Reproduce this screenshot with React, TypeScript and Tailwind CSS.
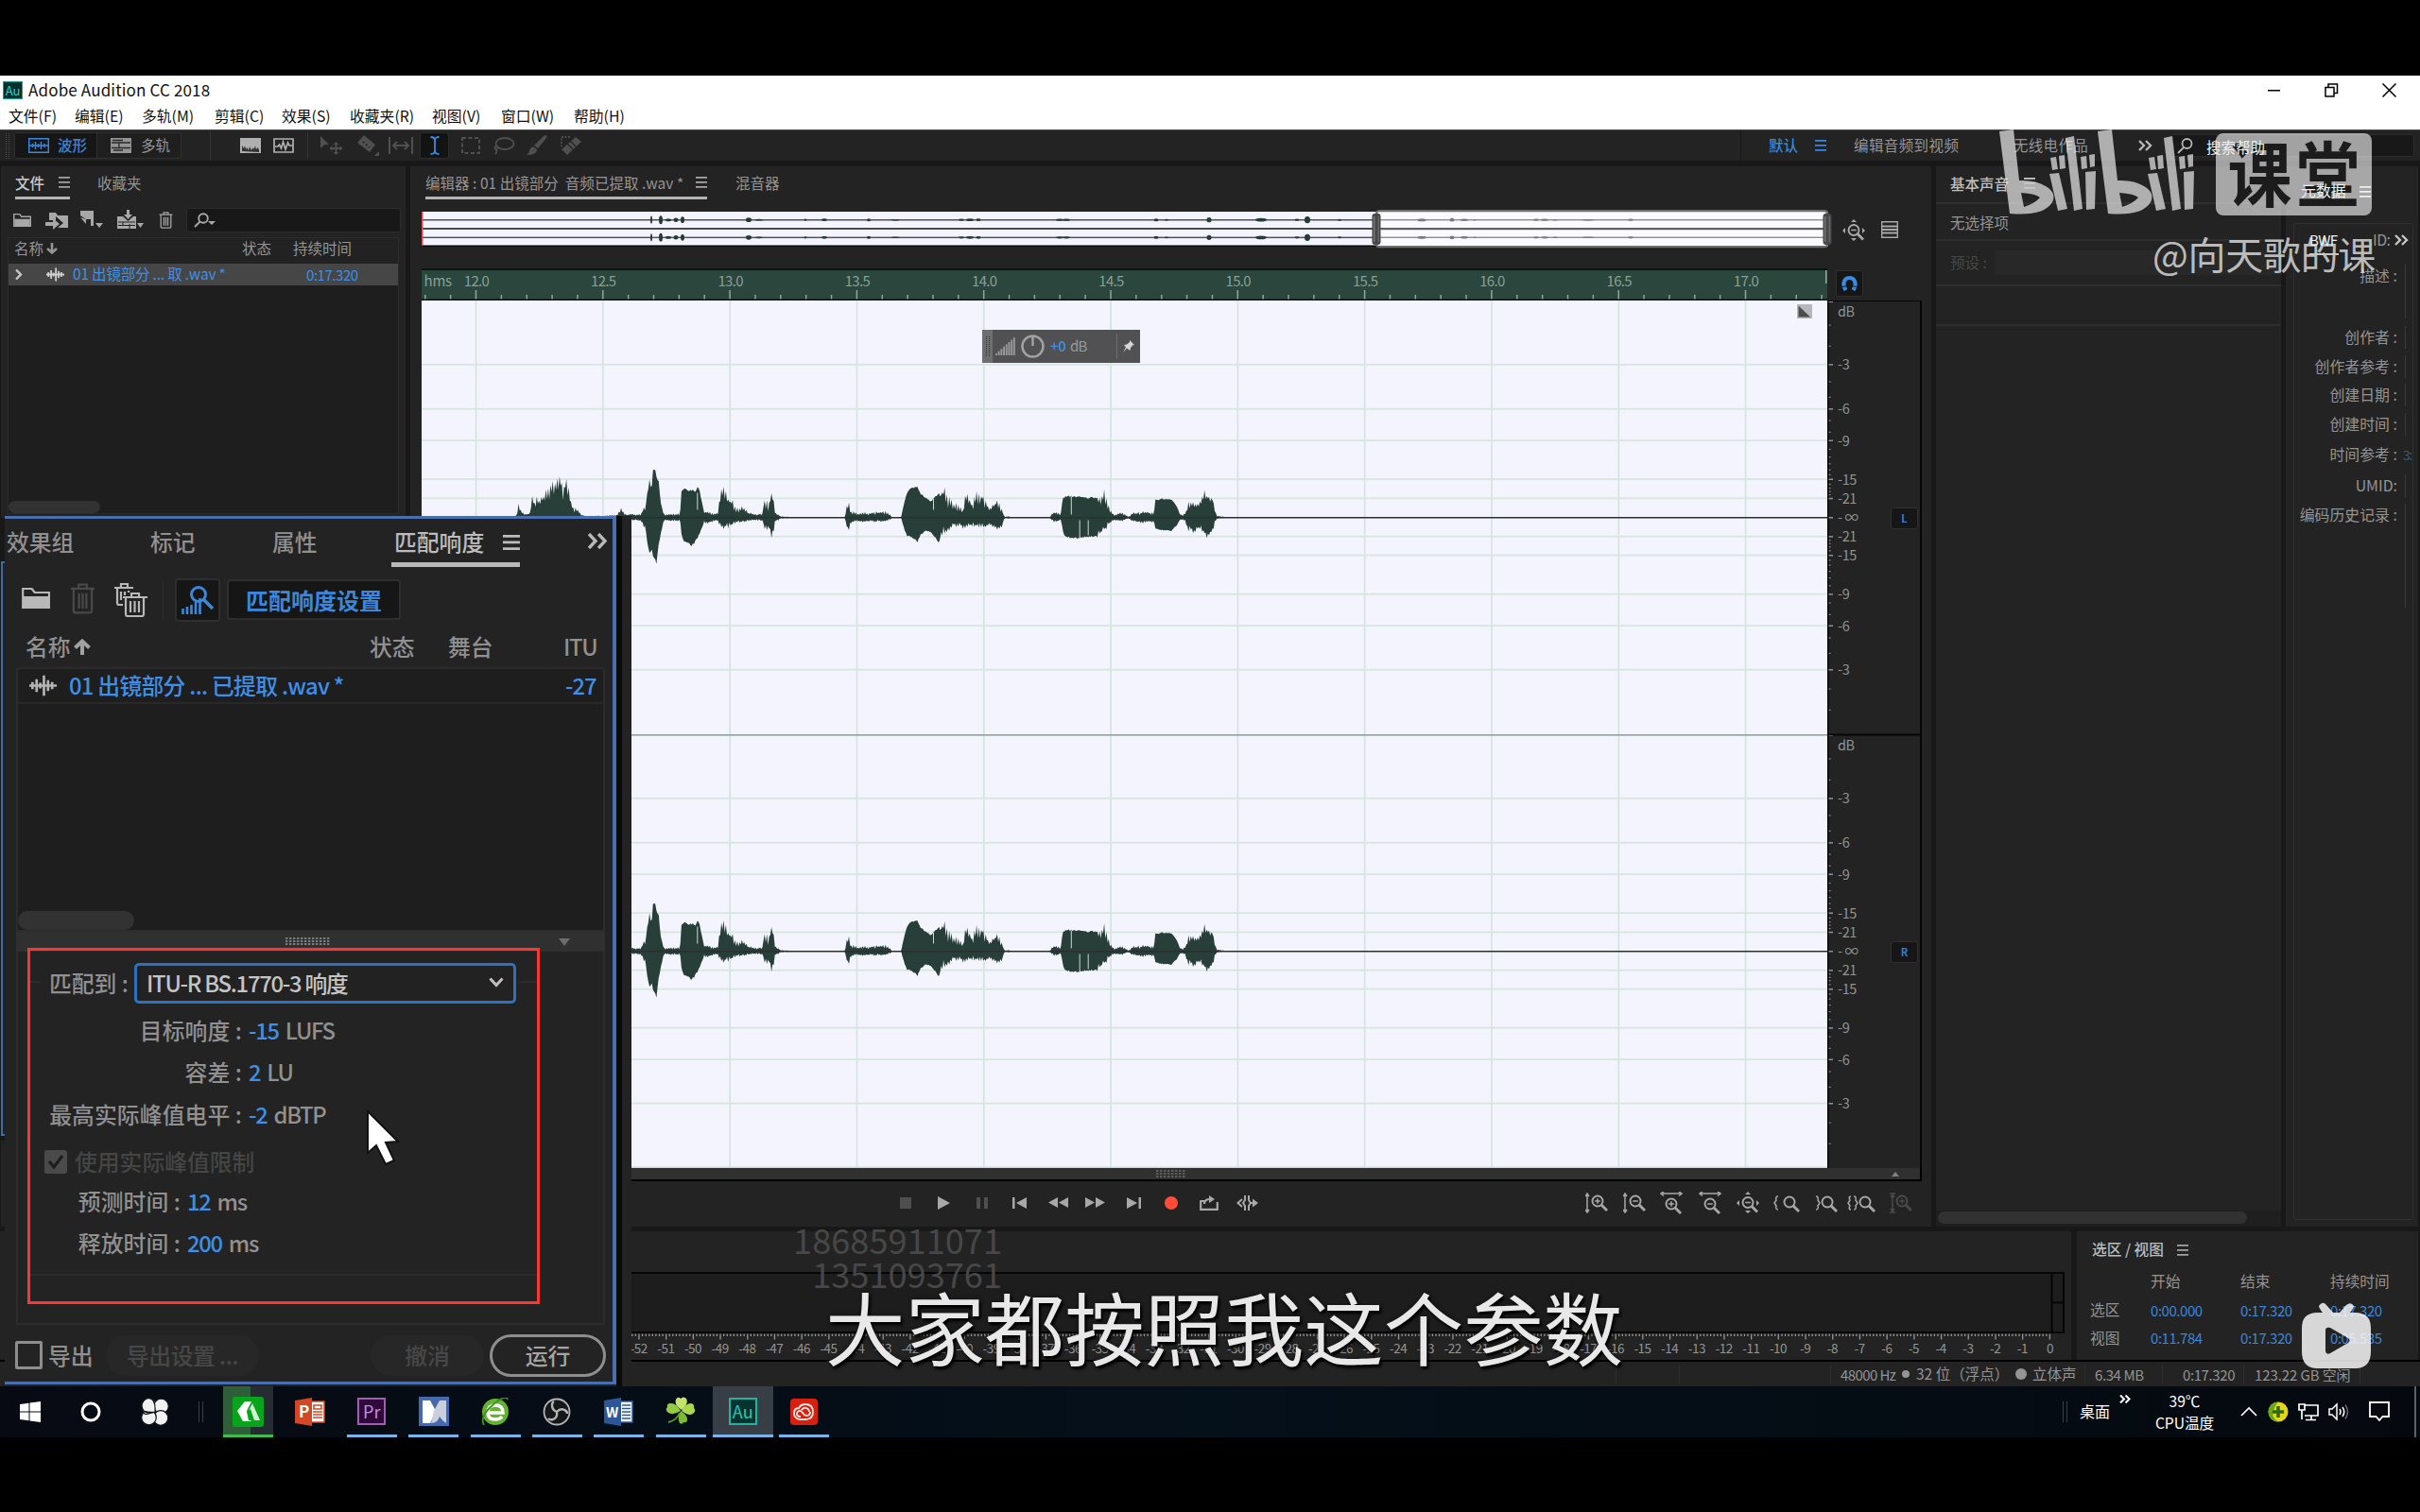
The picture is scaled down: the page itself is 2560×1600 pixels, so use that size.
import React from 'react';

type P = { children?: React.ReactNode; className?: string };

const Ic = ({ w, h, className = '', children }: { w: number; h: number; className?: string; children: React.ReactNode }) => (
  <svg width={w} height={h} viewBox={`0 0 ${w} ${h}`} fill="currentColor" className={`shrink-0 ${className}`}>
    {children}
  </svg>
);

const Burger = ({ className = '' }: P) => (
  <Ic w={12} h={13} className={className}>
    <path d="M0 0h12v1.8H0zM0 5h12v1.8H0zM0 10h12v1.8H0z" />
  </Ic>
);

const Sep = ({ className = '' }: P) => <div className={`w-px shrink-0 ${className}`} />;

const Grip = ({ cols, rows, className = '' }: { cols: number; rows: number; className?: string }) => (
  <Ic w={cols * 4} h={rows * 3} className={className}>
    {Array.from({ length: cols * rows }, (_, i) => (
      <rect key={i} x={(i % cols) * 4} y={Math.floor(i / cols) * 3} width="2.4" height="2" />
    ))}
  </Ic>
);

const WaveGlyph = ({ w, h, className = '' }: { w: number; h: number; className?: string }) => (
  <svg width={w} height={h} viewBox="0 0 30 22" className={`shrink-0 ${className}`} stroke="currentColor" strokeWidth="2.8" fill="none">
    <path d="M0 11h30M3.500 7v8M8 4v14M12 8v6M16 0v22M20.500 5v12M25 7v8" />
  </svg>
);

const Trash = ({ w, h, className = '' }: { w: number; h: number; className?: string }) => (
  <svg width={w} height={h} viewBox="0 0 26 34" className={`shrink-0 ${className}`} stroke="currentColor" strokeWidth="2.4" fill="none">
    <path d="M0 6h26M8.5 5.500V1.500h9V5.500M3 7v23q0 2.500 2.500 2.500h15q2.500 0 2.500-2.500V7M9 11v17M13 11v17M17 11v17" />
  </svg>
);

const Folder = ({ w, h, className = '' }: { w: number; h: number; className?: string }) => (
  <svg width={w} height={h} viewBox="0 0 30 24" className={`shrink-0 ${className}`}>
    <path d="M1.200 22V2h9.500l3 4H29v16z" stroke="currentColor" strokeWidth="2.200" fill="none" />
    <path d="M2 10h26v12H2z" fill="currentColor" />
  </svg>
);

/* ---------- wave form data: [x, above, below] ---------- */
const KEYS: number[][] = [
  [-213, 2, 2], [-208, 14, 8], [-205, 50, 10], [-201, 26, 8], [-190, 10, 8], [-176, 16, 10], [-174, 84, 10], [-168, 55, 10], [-158, 66, 10],
  [-145, 74, 10], [-138, 102, 10], [-120, 114, 10], [-114, 118, 10], [-109, 150, 10], [-104, 142, 10], [-98, 116, 10], [-92, 126, 10], [-86, 115, 10],
  [-82, 50, 10], [-70, 32, 8], [-55, 10, 8], [-44, 5, 5], [-20, 5, 5],
  [0, 6, 6], [28, 8, 8], [38, 30, 8], [50, 10, 8], [85, 12, 12], [95, 40, 40], [103, 95, 95], [106, 125, 120], [110, 80, 100],
  [113, 155, 120], [118, 150, 135], [122, 130, 152], [127, 120, 90], [132, 45, 50], [140, 10, 10], [178, 12, 12], [181, 80, 50],
  [186, 90, 75], [200, 84, 85], [206, 86, 90], [215, 85, 75], [221, 100, 60], [228, 60, 40], [234, 20, 20], [250, 18, 18], [260, 12, 12],
  [269, 15, 15], [271, 65, 28], [279, 100, 38], [284, 86, 33], [294, 65, 32], [300, 58, 27], [310, 34, 20], [325, 36, 15], [340, 17, 12],
  [360, 12, 10], [373, 12, 12], [376, 50, 38], [382, 64, 44], [388, 28, 30], [392, 92, 64], [396, 88, 62], [400, 55, 42], [403, 15, 10], [410, 10, 12],
  [416, 3, 3], [435, 2, 2], [436, 0, 0], [569, 0, 0], [571, 28, 30], [578, 50, 42], [583, 20, 20], [590, 20, 14], [600, 14, 14],
  [665, 20, 15], [680, 3, 3], [681, 0, 0], [702, 0, 0], [703, 12, 10], [710, 50, 40], [716, 82, 60], [728, 92, 62], [740, 102, 80],
  [748, 75, 55], [760, 62, 42], [772, 50, 45], [780, 62, 60], [788, 70, 75], [793, 78, 80], [797, 105, 65], [803, 95, 55], [812, 64, 42],
  [820, 84, 42], [823, 48, 30], [840, 42, 30], [850, 22, 34], [853, 84, 38], [862, 80, 32], [870, 50, 27], [880, 78, 34], [888, 86, 36],
  [895, 76, 32], [905, 45, 30], [915, 34, 27], [925, 56, 38], [935, 50, 38], [942, 28, 33], [946, 3, 2], [960, 3, 3], [962, 0, 0],
  [1053, 0, 0], [1057, 8, 6], [1065, 20, 18], [1080, 12, 10], [1083, 60, 35], [1090, 66, 62], [1112, 67, 66], [1140, 62, 62],
  [1165, 64, 60], [1172, 80, 56], [1180, 86, 50], [1186, 80, 40], [1195, 30, 20], [1205, 10, 10], [1225, 16, 12], [1238, 4, 3],
  [1243, 4, 4], [1250, 17, 16], [1275, 18, 18], [1297, 16, 16], [1301, 14, 14], [1304, 55, 35], [1315, 58, 40], [1342, 59, 42],
  [1355, 35, 25], [1362, 12, 10], [1368, 8, 8], [1375, 14, 14], [1383, 50, 44], [1395, 54, 50], [1408, 48, 34], [1414, 66, 50],
  [1422, 86, 60], [1430, 84, 72], [1440, 74, 50], [1446, 20, 15], [1450, 6, 5], [1460, 3, 2], [1485, 1, 1], [1486, 0, 0],
];
const SMOOTH = [[100, 136], [181, 232], [705, 792], [1084, 1166], [1304, 1360]];

function wavePath(cy: number) {
  const top: string[] = [];
  const bot: string[] = [];
  let seed = 7;
  const rnd = () => {
    seed = (seed * 16807) % 2147483647;
    return seed / 2147483647;
  };
  let k = 0;
  let n = 0;
  for (let v = -213; v <= 1486; v += 2.7) {
    n++;
    while (k < KEYS.length - 2 && KEYS[k + 1][0] < v) k++;
    const [a, b] = [KEYS[k], KEYS[k + 1]];
    const t = (v - a[0]) / (b[0] - a[0]);
    const smooth = SMOOTH.some(([s, e]) => v >= s && v <= e);
    const peak = n % 2 === 0;
    const j1 = smooth ? 0.95 + rnd() * 0.09 : peak ? 0.78 + rnd() * 0.3 : 0.42 + rnd() * 0.35;
    const j2 = smooth ? 0.95 + rnd() * 0.09 : peak ? 0.78 + rnd() * 0.3 : 0.5 + rnd() * 0.35;
    const x = (v / 2.24 + 640 - 446).toFixed(1);
    top.push(`${x} ${(cy - ((a[1] + (b[1] - a[1]) * t) / 3) * j1).toFixed(1)}`);
    bot.push(`${x} ${(cy + ((a[2] + (b[2] - a[2]) * t) / 3) * j2).toFixed(1)}`);
  }
  return `M${top.join('L')}L${bot.reverse().join('L')}Z`;
}

const DB: [string, number][] = [['-3', 68.7], ['-6', 115.6], ['-9', 149], ['-15', 190], ['-21', 210.3], ['- ∞', 230.5], ['-21', 250.6], ['-15', 270.5], ['-9', 311.6], ['-6', 345], ['-3', 391.5]];
const DBMINOR = [74, 112, 176, 204, 246, 267, 298, 312, 324, 335, 344, 361, 368, 374, 380].flatMap((v) => [v, 842 - v]).map((v) => v / 1.704 - 17);
const TICK0 = 57.5;
const TICKW = 134.3;

function WaveView() {
  return (
    <svg width="1487" height="918" viewBox="0 0 1487 918" className="block shrink-0 bg-[#f3f4fd]">
      {Array.from({ length: 11 }, (_, i) => (
        <rect key={i} x={TICK0 + TICKW * i - 0.75} y="0" width="1.7" height="918" fill="#d7e4de" />
      ))}
      {[0, 459].map((o) => (
        <g key={o}>
          {DB.map(([l, y], i) => (l === '- ∞' ? null : <rect key={i} x="0" y={y + o - 1.75} width="1487" height="1.700" fill="#d6e6dc" />))}
        </g>
      ))}
      <rect x="0" y="459" width="1487" height="1.600" fill="#8fa398" />
      {[229.500, 688.500].map((cy) => (
        <g key={cy}>
          <path d={wavePath(cy)} fill="#273f38" />
          <path d={`M291.800 ${cy - 26}v18M687.300 ${cy - 22}v19M696.200 ${cy + 3}v20M705.200 ${cy + 3}v16M541.500 ${cy - 20}v12`} stroke="#dfe6e6" strokeWidth="0.9" />
          <rect x="0" y={cy - 0.5} width="1487" height="1.500" fill="#2c2f30" />
        </g>
      ))}
      <rect x="0" y="916.5" width="1487" height="1.5" fill="#cfd8d4" />
      <rect x="1455" y="4" width="16" height="15" fill="#b6b7bd" />
      <path d="M1456.500 5.500v12h12.500z" fill="#4c4c4c" />
    </svg>
  );
}

function DbScale() {
  return (
    <svg width="100" height="918" viewBox="0 0 100 918" className="block shrink-0" fontSize="14.500">
      {[0, 459].map((o) => (
        <g key={o} fill="#929292">
          <rect x="1" y={o + 0.5} width="5" height="1.5" />
          {DB.map(([l, y], i) => (
            <g key={i}>
              <rect x="1" y={y + o - 1.5} width="5" height="1.5" />
              <text x="11" y={y + o + 4.500} letterSpacing="-0.400">{l}</text>
            </g>
          ))}
          {DBMINOR.map((y, i) => (
            <rect key={i} x="1.500" y={y + o - 1} width="2" height="1.200" />
          ))}
          <text x="11" y={o + 17} letterSpacing="-0.4">dB</text>
        </g>
      ))}
      <path d="M0 0h100M99 0v918M0 459.500h100M0.500 0v918" stroke="#060606" strokeWidth="2" />
    </svg>
  );
}

function Ruler() {
  return (
    <svg width="1487" height="34" viewBox="0 0 1487 34" className="block shrink-0 bg-[#2b463d]" fontSize="15" fill="#86a196">
      <rect width="1487" height="2" fill="#0c1310" />
      <text x="2.500" y="19" letterSpacing="-0.2">hms</text>
      {Array.from({ length: 57 }, (_, i) => i - 2).map((n) => {
        const x = TICK0 + (n * TICKW) / 5;
        if (x < 0 || x > 1487) return null;
        return <rect key={n} x={x - 0.75} y={n % 5 === 0 ? 23 : 28} width="1.5" height="10" fill="#8fa79d" />;
      })}
      {['12.0', '12.5', '13.0', '13.5', '14.0', '14.5', '15.0', '15.5', '16.0', '16.5', '17.0'].map((l, i) => (
        <text key={l} x={TICK0 + TICKW * i + 0.5} y="19" textAnchor="middle" letterSpacing="-0.700">{l}</text>
      ))}
      <rect x="1485" y="2" width="1.500" height="14" fill="#9aa" />
      <rect y="32.500" width="1487" height="1.500" fill="#0c1310" />
    </svg>
  );
}

const OV: number[][] = [
  [689, 2, 5.5], [699, 4, 6], [707, 6, 2], [715, 5, 3], [722, 4, 4.5], [792, 6, 3.2], [803, 8, 1.2], [852, 3, 1.5], [872, 6, 1.8], [919, 4, 2], [947, 9, 1],
  [1017, 6, 1.5], [1026, 8, 1.8], [1035, 5, 1.8], [1121, 8, 1.5], [1128, 8, 1.5], [1223, 5, 2], [1234, 4, 1.2], [1279, 5, 3.5], [1334, 12, 2.500], [1372, 5, 1.5], [1383, 6, 4.8],
  [1417, 4, 1.4], [1504, 9, 2], [1536, 5, 2.5], [1549, 8, 1.6], [1560, 3, 1], [1625, 6, 1.5], [1634, 8, 1.5], [1645, 6, 1], [1680, 14, 1], [1725, 6, 1.5],
];

function Overview() {
  return (
    <svg width="1494" height="42" viewBox="0 0 1494 42" className="block shrink-0">
      <rect x="0" y="2" width="1488" height="36.500" fill="#f3f4fd" />
      <rect x="0" y="37.500" width="1010" height="1.500" fill="#050505" />
      {[10.700, 29.300].map((y) => (
        <rect key={y} x="0" y={y - 0.7} width="1010" height="1.500" fill="#4d5357" />
      ))}
      <rect x="0" y="19" width="1010" height="2" fill="#4a4a4e" />
      <rect x="1010" y="1.200" width="477" height="38" rx="3" fill="#fafaff" stroke="#6f6f6f" strokeWidth="2.200" />
      {[10.700, 29.300].map((y) => (
        <rect key={y} x="1010" y={y - 0.7} width="476" height="1.400" fill="#8d8d8d" />
      ))}
      <rect x="1010" y="19" width="476" height="2.200" fill="#5e5e5e" />
      {[10.700, 29.300].map((y) =>
        OV.map(([x, w, h]) => <ellipse key={`${x}-${y}`} cx={x - 446} cy={y} rx={w / 2} ry={h * 0.75} fill={x > 1456 ? '#777b80' : '#263a36'} />),
      )}
      <rect x="0" y="2" width="1.500" height="36" fill="#d64b4b" />
      {[1005.500, 1482.500].map((x) => (
        <g key={x}>
          <rect x={x} y="4" width="9" height="33" rx="3" fill="#474747" />
          <rect x={x + 1.500} y="7" width="1.500" height="27" fill="#777" />
          <rect x={x + 6} y="7" width="1.500" height="27" fill="#666" />
        </g>
      ))}
    </svg>
  );
}

/* ---------- title + menu + toolbar ---------- */
function TitleBar() {
  return (
    <div className="flex h-[30px] shrink-0 items-center bg-white pl-[3px] text-[#111]">
      <div className="flex h-[19px] w-[21px] items-center justify-center border border-[#1b9e8f] bg-[#00302c] text-[13px] leading-none text-[#29d3bd]">Au</div>
      <span className="mt-[-2px] ml-[6px] text-[17px] tracking-[0.15px]">Adobe Audition CC 2018</span>
      <div className="ml-auto grid grid-cols-[60px_61px_40px] items-center text-black">
        <Ic w={13} h={14}><path d="M0 7h13v1.500H0z" /></Ic>
        <svg width="15" height="15" viewBox="0 0 15 15" fill="none" stroke="currentColor" strokeWidth="1.500"><path d="M1 4.500h9V14H1zM4 4V1h9.500v9.500H10.500" /></svg>
        <svg width="15" height="15" viewBox="0 0 15 15" stroke="currentColor" strokeWidth="1.500"><path d="M0.500 0.500l14 14M14.500 0.500l-14 14" /></svg>
      </div>
    </div>
  );
}

const MenuBar = () => (
  <div className="grid h-[27px] shrink-0 grid-cols-[70px_71px_77px_71px_72px_87px_73px_77px_80px] items-center bg-white pb-[2px] pl-[9px] text-[15.8px] whitespace-nowrap text-[#111]">
    {['文件(F)', '编辑(E)', '多轨(M)', '剪辑(C)', '效果(S)', '收藏夹(R)', '视图(V)', '窗口(W)', '帮助(H)'].map((m) => (
      <span key={m}>{m}</span>
    ))}
  </div>
);

function Toolbar() {
  return (
    <div className="flex h-[33px] shrink-0 items-center border-t border-[#4a4a4a] bg-[#232323] text-[15.5px] whitespace-nowrap text-[#949494]">
      <div className="ml-[6px] h-[27px] w-[4px] shrink-0 border-x border-dotted border-[#4a4a4a]" />
      <div className="ml-[5px] flex h-[28px] w-[177px] shrink-0 overflow-hidden rounded-[3px] border border-[#303030] bg-[#1f1f1f]">
        <div className="flex w-[87px] items-center border-r border-[#303030] bg-[#161616] pl-[14px] font-medium text-[#3c87dc]">
          <svg width="22" height="16" viewBox="0 0 22 16" fill="none" stroke="currentColor" strokeWidth="1.500"><path d="M0.700 0.700h20.600v14.600H0.700zM1 8h20M4.500 6v4M7.500 4v8M10.500 6v4M13.500 4v8M17 6v4" /></svg>
          <span className="ml-[9px]">波形</span>
        </div>
        <div className="flex items-center pl-[14px]">
          <svg width="22" height="16" viewBox="0 0 22 16" fill="#949494"><path d="M0 0h22v16H0z" /><path d="M1 5h20M1 10.500h20" stroke="#2a2a2a" strokeWidth="1.300" /><path d="M2 2.500h11M9 5v6M3 13h10" stroke="#2a2a2a" strokeWidth="1.300" /></svg>
          <span className="ml-[10px]">多轨</span>
        </div>
      </div>
      <Sep className="ml-[30px] h-[32px] bg-[#333]" />
      <svg width="22" height="16" viewBox="0 0 22 16" className="ml-[31px] shrink-0"><rect width="22" height="16" fill="#b0b0b0" /><path d="M2 14V8l2 3 1-3 1 4 1-2 2 3 1-4 2 4 2-3 1 2 1-4 1 4 2-2 1 3v2z" fill="#333" /></svg>
      <svg width="22" height="16" viewBox="0 0 22 16" className="ml-[13px] shrink-0" fill="none" stroke="#b0b0b0" strokeWidth="1.700"><path d="M1 1h20v14H1zM2 9h3l1.500-2 2 4 2-7 2.500 8 2.500-7 1.500 3h3.500" /></svg>
      <Sep className="ml-[14px] h-[28px] bg-[#333]" />
      <svg width="25" height="24" viewBox="0 0 25 24" className="ml-[12px] shrink-0" fill="#4f4f4f"><path d="M1 2l9 9H5.500L1 15z" /><path d="M17.500 8l3 3h-2v3h3v-2l3 3-3 3v-2h-3v3h2l-3 3-3-3h2v-3h-3v2l-3-3 3-3v2h3v-3h-2z" /></svg>
      <svg width="25" height="24" viewBox="0 0 25 24" className="ml-[14px] shrink-0"><path d="M8 1l12 10-6 8L1 9z" fill="#4f4f4f" /><path d="M7 8l7 6" stroke="#232323" strokeWidth="1.500" strokeDasharray="2 2" /><path d="M24 18v5h-5z" fill="#4f4f4f" /></svg>
      <svg width="26" height="18" viewBox="0 0 26 18" className="ml-[9px] shrink-0" fill="none" stroke="#4f4f4f" strokeWidth="2"><path d="M1 0v18M25 0v18M5 9h16M9 5L5 9l4 4M17 5l4 4-4 4" /></svg>
      <div className="ml-[7px] flex h-[28px] w-[31px] shrink-0 items-center justify-center rounded-[3px] border border-[#2c2c2c] bg-[#131313]">
        <svg width="10" height="20" viewBox="0 0 10 20" fill="none" stroke="#3b8ae2" strokeWidth="1.800"><path d="M0.500 1q4.500 0 4.500 3.500Q5 1 9.500 1M5 4v12M0.500 19Q5 19 5 15.500 5 19 9.500 19" /></svg>
      </div>
      <svg width="20" height="18" viewBox="0 0 20 18" className="ml-[13px] shrink-0" fill="none" stroke="#4f4f4f" strokeWidth="2"><path d="M1 1h18v16H1z" strokeDasharray="4 2.500" /></svg>
      <svg width="23" height="19" viewBox="0 0 23 19" className="ml-[14px] shrink-0" fill="none" stroke="#4f4f4f" strokeWidth="1.800"><ellipse cx="12" cy="7" rx="9.500" ry="6" /><path d="M3 9q-3 3 0 4 3-1 1-3M3 13q1 3-1 5" /></svg>
      <svg width="22" height="22" viewBox="0 0 22 22" className="ml-[12px] shrink-0" fill="#4f4f4f"><path d="M21 0q1 1 0 3L12 14l-4-3L18 1q2-1 3-1zM7 12l4 3q0 6-11 6 3-2 3-5 1-3 4-4z" /></svg>
      <svg width="25" height="22" viewBox="0 0 25 22" className="ml-[12px] shrink-0"><path d="M18 2l6 5L9 21l-6-6z" fill="#4f4f4f" /><path d="M9 9l6 6M12 6l6 6" stroke="#232323" strokeWidth="1.200" /><path d="M12 2H3v10" stroke="#4f4f4f" strokeWidth="1.800" strokeDasharray="2 1.500" fill="none" /></svg>
      <div className="ml-auto flex h-full items-center">
        <div className="grid h-full w-[454px] grid-cols-[49px_41px_169px_132px_40px] items-center border-l border-[#181818] pl-[29px]">
          <span className="font-medium text-[#3b87dc]">默认</span>
          <Burger className="text-[#3b87dc]" />
          <span className="tracking-[0.4px]">编辑音频到视频</span>
          <span className="tracking-[0.3px]">无线电作品</span>
          <svg width="15" height="12" viewBox="0 0 15 12" fill="none" stroke="#b8b8b8" strokeWidth="2.400"><path d="M1 1l5 5-5 5M8 1l5 5-5 5" /></svg>
        </div>
        <div className="mr-[6px] flex h-[24px] w-[259px] items-center rounded-[3px] border border-[#2c2c2c] bg-[#181818] pl-[7px]">
          <svg width="17" height="17" viewBox="0 0 17 17" fill="none" stroke="#b5b5b5" strokeWidth="1.800"><circle cx="10.500" cy="6" r="5" /><path d="M7 10l-6 6" /></svg>
          <span className="relative z-10 mt-[3px] ml-[14px] text-[#f0f0f0]">搜索帮助</span>
        </div>
      </div>
    </div>
  );
}

/* ---------- files panel ---------- */
function FilesPanel() {
  return (
    <div className="flex h-[372px] flex-col bg-[#232323] text-[15.5px] whitespace-nowrap text-[#949494]">
      <div className="flex h-[36px] items-start gap-[29px] pl-[15px]">
        <div className="flex h-[35px] w-[58px] items-center justify-between border-b-[3px] border-[#b4b4b4] pt-[3px] font-medium text-[#c8c8c8]">
          文件
          <Burger className="text-[#a2a2a2]" />
        </div>
        <span className="flex h-[36px] items-center">收藏夹</span>
      </div>
      <div className="mt-[7px] flex h-[27px] items-center pl-[13px] text-[#a8a8a8]">
        <div className="grid w-[183px] grid-cols-[34px_37px_39px_44px_29px] items-center">
          <Folder w={19} h={16} />
          <svg width="24" height="20" viewBox="0 0 24 20" fill="currentColor"><path d="M4 2h7l2 3h11v13H13l6-5-8-7v4H4z" /><path d="M0 12h8V8l7 6-7 6v-4H0z" /></svg>
          <svg width="24" height="20" viewBox="0 0 24 20" fill="currentColor"><path d="M0 0h14v16h-3V9H6L0 5zM0 7l6 2v5zM16 13h8l-4 5z" /></svg>
          <svg width="28" height="21" viewBox="0 0 28 21" fill="currentColor"><path d="M10 0h3v5h3l-4.500 5L7 5h3zM0 7h6l5.500 5L17 7h3v13H0z" /><path d="M1 13h18M6 13v4M13 15v5M1 16.500h18" stroke="#232323" strokeWidth="1" /><path d="M21 14h7l-3.500 5z" /></svg>
          <Trash w={15} h={18} />
        </div>
        <div className="flex h-[26px] w-[227px] items-center rounded-[3px] border border-[#2c2c2c] bg-[#181818] pl-[7px]">
          <svg width="25" height="16" viewBox="0 0 25 16" fill="none" stroke="currentColor" strokeWidth="1.900"><circle cx="10" cy="6" r="4.800" /><path d="M6.500 9.500L1 15" /><path d="M15 9h8l-4 4z" fill="currentColor" stroke="none" /></svg>
        </div>
      </div>
      <div className="mx-[7px] mt-[5px] mb-[4px] flex flex-1 flex-col border border-[#2b2b2b] bg-[#1e1e1e]">
        <div className="grid h-[27px] grid-cols-[34px_207px_54px_120px] items-center bg-[#222] pb-[5px] pl-[6px]">
          <span>名称</span>
          <svg width="12" height="12" viewBox="0 0 12 12" stroke="currentColor" strokeWidth="2.600" fill="none"><path d="M6 0v10M1 6l5 4.500L11 6" /></svg>
          <span>状态</span>
          <span>持续时间</span>
        </div>
        <div className="grid h-[23px] grid-cols-[33px_28px_247px_70px] items-center bg-[#464646] pb-px pl-[7px] text-[#3f8fe6]">
          <svg width="8" height="11" viewBox="0 0 8 11" stroke="#c8c8c8" strokeWidth="2.400" fill="none"><path d="M1 0.500l5 5-5 5" /></svg>
          <WaveGlyph w={19} h={15} className="text-[#d0d0d0]" />
          <span className="text-[15.5px] tracking-[-0.2px]">01 出镜部分 ... 取 .wav *</span>
          <span className="text-[15px] tracking-[-0.45px]">0:17.320</span>
        </div>
        <div className="mt-auto h-[13px] w-[97px] rounded-full bg-[#323232]" />
      </div>
    </div>
  );
}

/* ---------- editor ---------- */
const ZoomGlass = ({ sign }: { sign?: '+' | '-' }) => (
  <g fill="none" stroke="currentColor" strokeWidth="1.900">
    <circle cx="7" cy="7" r="5.500" />
    <path d="M11 11l6 6" strokeWidth="2.800" />
    {sign && <path d={sign === '+' ? 'M4.200 7h5.600M7 4.200v5.600' : 'M4.200 7h5.600'} strokeWidth="1.500" />}
  </g>
);

const ZoomFull = () => (
  <svg width="24" height="23" viewBox="0 0 24 23" className="text-[#a8a8a8]">
    <g transform="translate(5 4.500)"><ZoomGlass sign="-" /></g>
    <path d="M12 0l3 3H9zM0 12l3-3v6zM24 12l-3-3v6zM12 23l3-3H9z" fill="currentColor" />
  </svg>
);

function ZoomTools() {
  const V = 'M2 1v20M0 4l2-3 2 3M0 18l2 3 2-3';
  const H = 'M1 2h22M4 0L1 2l3 2.500M20 0l3 2-3 2.500';
  return (
    <div className="grid h-full grid-cols-[40px_39px_41px_40px_39px_44px_34px_44px_30px] items-center text-[#a8a8a8]">
      <svg width="24" height="22" viewBox="0 0 24 22"><path d={V} stroke="currentColor" strokeWidth="1.500" fill="none" /><g transform="translate(6 2)"><ZoomGlass sign="+" /></g></svg>
      <svg width="24" height="22" viewBox="0 0 24 22"><path d={V} stroke="currentColor" strokeWidth="1.500" fill="none" /><g transform="translate(6 2)"><ZoomGlass sign="-" /></g></svg>
      <svg width="24" height="24" viewBox="0 0 24 24"><path d={H} stroke="currentColor" strokeWidth="1.500" fill="none" /><g transform="translate(5 6)"><ZoomGlass sign="+" /></g></svg>
      <svg width="24" height="24" viewBox="0 0 24 24"><path d={H} stroke="currentColor" strokeWidth="1.500" fill="none" /><g transform="translate(5 6)"><ZoomGlass sign="-" /></g></svg>
      <ZoomFull />
      <svg width="28" height="20" viewBox="0 0 28 20"><path d="M5 3Q2 3 3 7l-2 3 2 3q-1 4 2 4" stroke="currentColor" strokeWidth="1.500" fill="none" /><g transform="translate(10 2)"><ZoomGlass /></g></svg>
      <svg width="28" height="20" viewBox="0 0 28 20"><path d="M1 3q3 0 2 4l2 3-2 3q1 4-2 4" stroke="currentColor" strokeWidth="1.500" fill="none" /><g transform="translate(6 2)"><ZoomGlass /></g></svg>
      <svg width="30" height="20" viewBox="0 0 30 20"><path d="M4 3Q1 3 3 7l-2 3 2 3q-2 4 1 4M7 3q3 0 2 4l2 3-2 3q1 4-2 4" stroke="currentColor" strokeWidth="1.500" fill="none" /><g transform="translate(12 2)"><ZoomGlass /></g></svg>
      <svg width="24" height="22" viewBox="0 0 24 22" className="text-[#4a4a4a]"><path d="M4 2v18M1 1h6M1 21h6M2 5l2-3 2 3M2 17l2 3 2-3" stroke="currentColor" strokeWidth="1.500" fill="none" /><g transform="translate(7 2)"><ZoomGlass sign="+" /></g></svg>
    </div>
  );
}

function Transport() {
  return (
    <div className="grid h-full grid-cols-[40px_41px_38px_38px_39px_44px_40px_37px_39px_40px] items-center text-[#a8a8a8]">
      <Ic w={13} h={12} className="text-[#4f4f4f]"><path d="M0 0h12v12H0z" /></Ic>
      <Ic w={13} h={14}><path d="M0 0l13 7-13 7z" /></Ic>
      <Ic w={13} h={12} className="text-[#4f4f4f]"><path d="M0 0h4v12H0zM8 0h4v12H8z" /></Ic>
      <Ic w={16} h={12}><path d="M0 0h2.500v12H0zM15 0v12L4 6z" /></Ic>
      <Ic w={21} h={11}><path d="M10 0v11L0 5.500zM21 0v11L11 5.500z" /></Ic>
      <Ic w={21} h={11}><path d="M0 0l10 5.500L0 11zM11 0l10 5.500L11 11z" /></Ic>
      <Ic w={16} h={12}><path d="M0 0l11 6-11 6zM12.500 0H15v12h-2.500z" /></Ic>
      <div className="size-[14px] rounded-full bg-[#ff4c38]" />
      <svg width="20" height="16" viewBox="0 0 20 16" fill="none" stroke="currentColor" strokeWidth="2.200"><path d="M6 6H1.200v8.800h17.600V7M5 9q0-5 6-5" /><path d="M10 0l6 4-6 4z" fill="currentColor" stroke="none" /></svg>
      <svg width="23" height="16" viewBox="0 0 23 16" fill="none" stroke="currentColor" strokeWidth="2"><path d="M6 4L1.500 8 6 12M9 0v5L7 8l2 3v5M13 0v5l2 3-2 3v5M14 8h5" /><path d="M17 3.500L23 8l-6 4.500z" fill="currentColor" stroke="none" /></svg>
    </div>
  );
}

const ChannelBtn = ({ label }: { label: string }) => (
  <div className="flex h-[23px] w-[29px] items-center justify-center rounded-[3px] border border-[#2f2f2f] bg-[#161616] text-[11px] font-bold text-[#2f7fd6]">{label}</div>
);

function EditorPanel() {
  return (
    <div className="flex w-[1609px] shrink-0 flex-col bg-[#232323] pl-[12px] text-[15.5px] whitespace-nowrap text-[#949494]">
      <div className="flex h-[46px] items-start gap-[30px] pl-[4px]">
        <div className="flex h-[35px] w-[298px] items-center justify-between border-b-[3px] border-[#b4b4b4] pt-[3px]">
          <span className="text-[15.5px] tracking-[0.03px]">编辑器 : 01 出镜部分 &nbsp;音频已提取 .wav *</span>
          <Burger className="text-[#a8a8a8]" />
        </div>
        <span className="flex h-[36px] items-center">混音器</span>
      </div>
      <div className="flex h-[42px] items-center">
        <Overview />
        <span className="ml-[9px]"><ZoomFull /></span>
        <svg width="18" height="18" viewBox="0 0 18 18" className="ml-[17px] text-[#a8a8a8]"><path d="M0.700 0.700h16.600v16.600H0.700z" fill="none" stroke="currentColor" strokeWidth="1.400" /><path d="M1 5.500h16M1 9h16M1 12.500h16" stroke="currentColor" strokeWidth="1.800" /></svg>
      </div>
      <div className="mt-[20px] flex h-[34px] items-center">
        <Ruler />
        <div className="mb-[3px] ml-[9px] flex h-[28px] w-[29px] items-center justify-center rounded-[3px] border border-[#2f2f2f] bg-[#161616]">
          <svg width="17" height="17" viewBox="0 0 17 17" fill="none"><path d="M4.500 16Q2 12 2.500 8.500 3.500 3 8.500 3t6 5.500q0.500 3.500-2 7.500" stroke="#3b8ae2" strokeWidth="4.200" /><path d="M1 12.500l6-1M16 12.500l-6-1" stroke="#161616" strokeWidth="1" /></svg>
        </div>
      </div>
      <div className="flex h-[918px]">
        <div className="relative">
          <WaveView />
          <div className="absolute top-[31px] left-[593px] flex h-[35px] w-[167px] items-center bg-[#515154] text-[15px] text-[#9a9a9a]">
            <div className="flex h-full w-[11px] items-center justify-center bg-[#6e6e70]">
              <div className="h-[21px] w-[4px] border-x border-dotted border-[#333]" />
            </div>
            <Ic w={21} h={19} className="ml-[3px]">{[0, 1, 2, 3, 4, 5, 6, 7].map((i) => <rect key={i} x={i * 2.7} y={17 - i * 2.4} width="1.900" height={2 + i * 2.4} />)}</Ic>
            <svg width="25" height="25" viewBox="0 0 25 25" fill="none" stroke="#a2a2a2" strokeWidth="2.500" className="ml-[6px]"><circle cx="12.500" cy="12.500" r="11" /><path d="M12.500 1v11" /></svg>
            <span className="mt-[-2px] ml-[6px] w-[21px] font-medium tracking-[-0.4px] text-[#3f8fe6]">+0</span>
            <span className="mt-[-2px] tracking-[-0.8px]">dB</span>
            <Sep className="ml-auto h-[27px] bg-[#6e6e70]" />
            <svg width="12" height="13" viewBox="0 0 12 13" fill="#d6d6d6" className="mx-[6px]"><path d="M7 0l5 5-2 0.500L8 8l-0.500 3L4 8.500 0 13l3-5.500L1 5l3-0.500L7 2z" /></svg>
          </div>
        </div>
        <div className="relative">
          <DbScale />
          <div className="absolute top-[219px] right-[4px] flex flex-col gap-[436px]">
            <ChannelBtn label="L" />
            <ChannelBtn label="R" />
          </div>
        </div>
      </div>
      <div className="flex h-[14px] w-[1587px] items-center border-r-2 border-b-2 border-black bg-[#303030]">
        <Grip cols={8} rows={3} className="ml-[777px] text-[#5c5c5c]" />
        <Ic w={8} h={5} className="ml-[746px] text-[#808080]"><path d="M4 0l4 5H0z" /></Ic>
      </div>
      <div className="flex h-[48px] items-center justify-between pr-[15px] pb-[3px] pl-[506px]">
        <Transport />
        <ZoomTools />
      </div>
    </div>
  );
}

/* ---------- right panels ---------- */
function EssentialSound() {
  return (
    <div className="ml-[5px] flex w-[365px] shrink-0 flex-col bg-[#232323] text-[15.5px] text-[#949494]">
      <div className="flex h-[40px] items-center border-b-2 border-[#2e2e2e] pb-px pl-[15px] text-[#c0c0c0]">
        <span className="w-[78px] font-medium">基本声音</span>
        <Burger className="relative z-10 text-[#c8c8c8]" />
      </div>
      <div className="flex h-[39px] items-center border-b-2 border-[#2e2e2e] pt-[3px] pl-[15px]">无选择项</div>
      <div className="flex h-[48px] items-center border-b-2 border-[#2e2e2e] pb-px pl-[15px] text-[#474747]">
        <span className="w-[47px]">预设 :</span>
        <div className="h-[26px] flex-1 bg-[#282828]" />
      </div>
      <div className="h-[42px] border-b-2 border-[#2e2e2e]" />
      <div className="mt-auto h-[17px] bg-[#1f1f1f] pt-px pl-[2px]">
        <div className="h-[13px] w-[327px] rounded-full bg-[#313131]" />
      </div>
    </div>
  );
}

function MetaRow({ label, className, tall = 'h-[24px]' }: { label: string; className: string; tall?: string }) {
  return (
    <div className={`flex items-start justify-end ${className}`}>
      <span className="w-[140px] shrink-0 pr-[8px] text-right whitespace-nowrap">{label}</span>
      <div className={`w-[8px] shrink-0 border-l border-[#3a3a3a] ${tall}`} />
    </div>
  );
}

function Metadata() {
  return (
    <div className="ml-[5px] flex w-[140px] shrink-0 flex-col bg-[#232323] text-[15.9px] leading-[24px] text-[#949494]">
      <div className="flex h-[60px] items-center pl-[16px] text-[#f0f0f0]">
        <span className="relative z-10 mt-[-8px] w-[62px]">元数据</span>
        <Burger className="relative z-10 mt-[-6px] text-[#f0f0f0]" />
      </div>
      <div className="mr-[5px] mb-[7px] ml-[8px] flex flex-1 flex-col rounded-[3px] border border-[#303030]">
        <div className="flex h-[43px] items-start pt-[5px] pl-[16px]">
          <span className="relative z-10 h-[28px] w-[31px] border-b-2 border-[#c8c8c8] text-[15px] tracking-[-0.6px] text-[#f0f0f0]">BWF</span>
          <span className="ml-[36px] w-[23px] tracking-[-0.5px]">ID:</span>
          <svg width="15" height="12" viewBox="0 0 15 12" fill="none" stroke="#c4c4c4" strokeWidth="2.400" className="mt-[6px]"><path d="M1 1l5 5-5 5M8 1l5 5-5 5" /></svg>
        </div>
        <MetaRow label="描述 :" className="h-[65px]" tall="h-[57px]" />
        <MetaRow label="创作者 :" className="h-[31px]" />
        <MetaRow label="创作者参考 :" className="h-[30px]" />
        <MetaRow label="创建日期 :" className="h-[31px]" />
        <MetaRow label="创建时间 :" className="h-[32px]" />
        <div className="flex h-[33px] items-start justify-end">
          <span className="pr-[6px]">时间参考 :</span>
          <span className="w-[10px] text-[14px] tracking-[-1.500px] text-[#34587e]">3:</span>
        </div>
        <MetaRow label="UMID:" className="h-[31px]" />
        <MetaRow label="编码历史记录 :" className="h-[120px]" tall="h-[110px]" />
      </div>
    </div>
  );
}

/* ---------- levels + selection ---------- */
function Levels() {
  const x0 = 2168.3;
  return (
    <div className="flex w-[2191px] flex-col bg-[#232323]">
      <svg width="2191" height="135" viewBox="0 1303 2191 135" fontSize="13.500" fill="#949494">
        <rect x="6" y="1347" width="2177" height="63" fill="#1d1d1d" stroke="#060606" strokeWidth="2" />
        <path d="M2170.500 1347v63M2170.500 1378.500h12" stroke="#060606" strokeWidth="2" />
        {Array.from({ length: 53 * 8 }, (_, n) => (
          <rect key={n} x={x0 - (n * 28.7) / 8 - 0.6} y="1411.500" width="1.300" height={n % 8 === 0 ? 6 : 2.5} />
        ))}
        {Array.from({ length: 53 }, (_, n) => (
          <text key={n} x={x0 - n * 28.7 + (n ? -0.3 : 0.3)} y="1432" textAnchor="middle" letterSpacing="-0.500">{n ? -n : 0}</text>
        ))}
      </svg>
    </div>
  );
}

function SelectionView() {
  const cell = 'text-[15px] tracking-[-0.45px] text-[#3b87dc]';
  return (
    <div className="ml-[6px] flex w-[361px] flex-col bg-[#232323] pl-[14px] text-[15.7px] whitespace-nowrap text-[#949494]">
      <div className="flex h-[38px] items-center pl-[2px] text-[#bcbcbc]">
        <span className="mt-[-1px] w-[90px] font-medium">选区 / 视图</span>
        <Burger className="mt-[2px] text-[#a4a4a4]" />
      </div>
      <div className="grid grid-cols-[64px_95px_95px_90px] grid-rows-[30px_30px_29px] items-center">
        <span /><span>开始</span><span>结束</span><span>持续时间</span>
        <span>选区</span><span className={cell}>0:00.000</span><span className={cell}>0:17.320</span><span className={cell}>0:17.320</span>
        <span>视图</span><span className={cell}>0:11.784</span><span className={cell}>0:17.320</span><span className={cell}>0:05.535</span>
      </div>
    </div>
  );
}

const StatusBar = () => (
  <div className="mt-[2px] flex h-[26px] shrink-0 items-center bg-[#232323] text-[15px] whitespace-nowrap text-[#949494]">
    <Sep className="ml-[1709px] h-[19px] bg-[#2e2e2e]" />
    <Sep className="ml-[66px] h-[19px] bg-[#2e2e2e]" />
    <Sep className="ml-[159px] h-[19px] bg-[#2e2e2e]" />
    <div className="ml-[10px] flex w-[258px] items-center">
      <span className="w-[61px] tracking-[-0.6px]">48000 Hz</span>
      <div className="mx-[4px] size-[8px] rounded-full bg-[#949494]" />
      <span className="ml-[3px] w-[105px] text-[15.500px]">32 位（浮点）</span>
      <div className="size-[12px] shrink-0 rounded-full bg-[#949494]" />
      <span className="ml-[6px] text-[15.500px]">立体声</span>
    </div>
    <Sep className="ml-0 h-[19px] bg-[#2e2e2e]" />
    <span className="ml-[10px] w-[71px] tracking-[-0.4px]">6.34 MB</span>
    <Sep className="h-[19px] bg-[#2e2e2e]" />
    <span className="ml-[21px] w-[64px] tracking-[-0.4px]">0:17.320</span>
    <Sep className="h-[19px] bg-[#2e2e2e]" />
    <span className="ml-[11px] w-[111px] tracking-[-0.1px]">123.22 GB 空闲</span>
    <Sep className="h-[19px] bg-[#2e2e2e]" />
  </div>
);

/* ---------- task bar ---------- */
const Slot = ({ line = '', bg = '', w = 'w-[53px]', children }: { line?: string; bg?: string; w?: string; children: React.ReactNode }) => (
  <div className={`flex h-full flex-col items-center ${w} ${bg}`}>
    <div className="flex flex-1 items-center justify-center pt-[2px]">{children}</div>
    <div className={`h-[3px] w-full ${line}`} />
  </div>
);

function TaskBar() {
  const blue = 'bg-[#76b4ea]';
  return (
    <div className="flex h-[54px] shrink-0 items-center bg-linear-to-r from-[#070a12] via-[#04101a] to-[#05090f] text-white">
      <svg width="22" height="22" viewBox="0 0 22 22" fill="#fff" className="ml-[21px]"><path d="M0 3l9.500-1.300v8.800H0zM10.500 1.500L22 0v10.500H10.500zM0 11.500h9.500v8.800L0 19zM10.500 11.500H22V22l-11.500-1.500z" /></svg>
      <svg width="22" height="22" viewBox="0 0 22 22" fill="none" stroke="#fff" strokeWidth="3" className="ml-[42px]"><circle cx="11" cy="11" r="9" /></svg>
      <svg width="30" height="30" viewBox="0 0 30 30" className="ml-[42px]" fill="#f2f2f2" stroke="#10151c" strokeWidth="1.200">
        <circle cx="9" cy="8.500" r="7.800" />
        <circle cx="21.500" cy="9" r="7.800" />
        <circle cx="21" cy="21.500" r="7.800" />
        <circle cx="8.500" cy="21" r="7.800" />
        <path d="M15 15Q7 18 1.500 13Q3 19 8 17q5-1 7-2zM9 0.700Q16 2 15 15q-6 1-12-1Q0 9 1.500 6 4 0.500 9 0.700z" />
      </svg>
      <div className="ml-[31px] h-[22px] w-[5px] border-x border-[#3a3f46]" />
      <div className="ml-[21px] flex h-full gap-[12.400px]">
        <Slot line="bg-[#3fbf4a]" bg="bg-linear-to-r from-[#2f5f38] from-55% to-[#252d33] to-55%">
          <svg width="33" height="32" viewBox="0 0 33 32"><rect width="33" height="32" rx="3" fill="#07a41c" /><path d="M13 5h7l-5 10 5 11h-9L5 15z" fill="#fff" /><path d="M21 7l8 18h-8l-4-10z" fill="#d5f3d7" /><path d="M19 13l-4 3 2 9h6z" fill="#07a41c" /></svg>
        </Slot>
        <Slot>
          <svg width="32" height="30" viewBox="0 0 32 30"><path d="M16 4h15v22H16z" fill="#fff" stroke="#d24726" strokeWidth="1.500" /><path d="M20 8h8v4h-8zM19 15h10M19 18h10M19 21h10" stroke="#d24726" strokeWidth="1.600" fill="none" /><path d="M0 3l18-3v30L0 27z" fill="#d24726" /><text x="4" y="21" fontSize="17" fontWeight="bold" fill="#fff">P</text></svg>
        </Slot>
        <Slot line={blue}>
          <div className="flex h-[29px] w-[30px] items-center justify-center border-2 border-[#a35bb5] bg-[#2d0a3a] pb-px text-[18px] text-[#c98ae0]">Pr</div>
        </Slot>
        <Slot line={blue}>
          <svg width="32" height="31" viewBox="0 0 32 31"><rect width="32" height="31" fill="#4669ae" /><path d="M4 4h8l6 11-6 13H4z" fill="#fff" /><path d="M29 4h-7l-6 11-3 13q7 0 9-7 3 5 7 7z" fill="#c9cfdb" /></svg>
        </Slot>
        <Slot line={blue}>
          <svg width="30" height="30" viewBox="0 0 30 30"><circle cx="15" cy="15" r="14" fill="#63b32e" /><path d="M7 16h16q0-8-8-8t-8 8q0 7 8 7 5 0 7-3" fill="none" stroke="#fff" strokeWidth="3.400" /><path d="M3 29Q-2 20 12 8T28 2" fill="none" stroke="#3d8f1c" strokeWidth="1.800" /></svg>
        </Slot>
        <Slot line={blue}>
          <svg width="30" height="30" viewBox="0 0 30 30" fill="none" stroke="#b5b5b5"><circle cx="15" cy="15" r="13.500" fill="#15171b" strokeWidth="1.800" /><path d="M15 15Q10 13 10 8q0-3 2-4M15 15q4-4 8-2 3 1 3 4M15 15q1 6-4 8-3 1-5-1" strokeWidth="2.400" /></svg>
        </Slot>
        <Slot line={blue}>
          <svg width="31" height="30" viewBox="0 0 31 30"><path d="M16 4h14v22H16z" fill="#fff" stroke="#2b579a" strokeWidth="1.500" /><path d="M19 8h9M19 11.500h9M19 15h9M19 18.500h9M19 22h9" stroke="#2b579a" strokeWidth="1.500" /><path d="M0 3l18-3v30L0 27z" fill="#2b579a" /><text x="2" y="20.500" fontSize="14.500" fontWeight="bold" fill="#fff">W</text></svg>
        </Slot>
        <Slot line={blue}>
          <svg width="32" height="31" viewBox="0 0 32 31">
            <path d="M17 14Q9 9 11 3q2-4 5-1 3-3 6 0 3 5-5 12z" fill="#c3e36a" />
            <path d="M16 15Q8 20 3 17q-4-3-1-6-1-4 3-4 6-1 11 8z" fill="#93cc42" />
            <path d="M17 15q8 6 12 3 4-3 1-6 1-4-3-5-6 0-10 8z" fill="#a9d84f" />
            <path d="M16 15q-4 8-1 13 3 2 4-1 4 1 4-3 0-5-7-9z" fill="#7bbb36" />
            <path d="M15 17q-3 8-12 10" fill="none" stroke="#5d9a22" strokeWidth="1.800" />
          </svg>
        </Slot>
      </div>
      <div className="ml-[7px] flex h-full gap-[6px]">
        <Slot line={blue} bg="bg-[#373e45]" w="w-[64px]">
          <div className="flex h-[29px] w-[30px] items-center justify-center border-2 border-[#1fb5a3] bg-[#06332f] pb-px text-[18px] text-[#27c9b5]">Au</div>
        </Slot>
        <Slot line={blue}>
          <svg width="29" height="28" viewBox="0 0 29 28"><rect width="29" height="28" rx="4" fill="#d8200f" /><g fill="none" stroke="#ffe9e6" strokeWidth="1.800"><path d="M16 6q8 0 8 8t-8 8h-6q-6-1-6-6.500T9 10q2-4 7-4z" /><path d="M21 14q0 4-4 4-2 0-4-3t-4-2q-2 1-2 3 0 3 4 3M12 12q2-3 5-2 3 1 3 4" /></g></svg>
        </Slot>
      </div>
      <div className="ml-auto flex h-full items-center text-[16px] whitespace-nowrap">
        <div className="h-[22px] w-[5px] border-x border-[#3a3f46]" />
        <span className="mt-[-2px] ml-[13px]">桌面</span>
        <svg width="12" height="9" viewBox="0 0 12 9" fill="none" stroke="#fff" strokeWidth="2" className="mt-[-28px] ml-[10px]"><path d="M1 0.500l4 4-4 4M6.500 0.500l4 4-4 4" /></svg>
        <div className="mt-[-1px] ml-[22px] flex w-[70px] flex-col items-center text-[15.700px] leading-[23px] tracking-[-0.1px]">
          <span>39℃</span>
          <span>CPU温度</span>
        </div>
        <div className="ml-[24px] flex items-center">
          <svg width="18" height="10" viewBox="0 0 18 10" fill="none" stroke="#fff" strokeWidth="1.700"><path d="M1 9l8-8 8 8" /></svg>
          <svg width="22" height="22" viewBox="0 0 22 22" className="ml-[11px]"><circle cx="11" cy="11" r="10.500" fill="#e6d61b" /><path d="M11 0.500a10.500 10.500 0 0 0 0 21q-8-5-5-12 2-6 5-9z" fill="#6aa81a" /><path d="M11 5v12M5 11h12" stroke="#2e6b12" strokeWidth="3.500" /></svg>
          <svg width="22" height="20" viewBox="0 0 22 20" fill="none" stroke="#fff" strokeWidth="1.700" className="ml-[10px]"><path d="M7 3h14v11H7M14 14v4M8 18.500h11M1 2h6v6H1zM4 8v10" /></svg>
          <svg width="22" height="20" viewBox="0 0 22 20" fill="none" stroke="#fff" strokeWidth="1.500" className="ml-[10px]"><path d="M1 7h3l5-5v16l-5-5H1zM12 7q2 3 0 6M15 5q3.500 5 0 10" /><path d="M18 2.500q5 7.500 0 15" stroke="#667" /></svg>
          <svg width="22" height="22" viewBox="0 0 22 22" fill="none" stroke="#fff" strokeWidth="1.800" className="ml-[21px]"><path d="M1 1h20v15h-6.500L11 20l-3.500-4H1z" /></svg>
          <div className="mr-[4px] ml-[26px] h-[54px] w-[2px] bg-[#5a6068]" />
        </div>
      </div>
    </div>
  );
}

/* ---------- magnified loudness panel ---------- */
function Param({ label, value, unit, cols, h }: { label: string; value: string; unit: string; cols: string; h: string }) {
  return (
    <div className={`grid items-center ${cols} ${h}`}>
      <span className="justify-self-end pr-[7px] tracking-[0.1px]">{label}</span>
      <span className="flex gap-[7px] tracking-[-1.3px]">
        <span className="text-[#3f8fe6]">{value}</span>
        <span>{unit}</span>
      </span>
    </div>
  );
}

function LoudnessPanel() {
  return (
    <div className="absolute top-[546px] left-[5px] flex h-[921px] w-[663px] bg-[#232323] text-[23.800px] leading-[28px] font-medium whitespace-nowrap text-[#909090]">
      <div className="flex h-[919px] w-[647px] shrink-0 flex-col border-t-[3px] border-r-[4px] border-b-[3px] border-[#4a6fb0]">
        <div className="grid h-[58px] grid-cols-[152px_129px_126px_208px_30px] items-start pl-[2px]">
          <span className="pt-[10px]">效果组</span>
          <span className="pt-[10px]">标记</span>
          <span className="pt-[10px]">属性</span>
          <div className="flex h-[51px] w-[136px] items-center justify-between border-b-[5px] border-[#b8b8b8] pt-[3px] pl-[3px] text-[#bcbcbc]">
            <span className="mt-[-2px]">匹配响度</span>
            <Ic w={18} h={16}><path d="M0 0h18v2.700H0zM0 6.600h18v2.700H0zM0 13.200h18v2.700H0z" /></Ic>
          </div>
          <svg width="21" height="17" viewBox="0 0 21 17" fill="none" stroke="#b8b8b8" strokeWidth="3.400" className="mt-[15px]"><path d="M1 1l7 7.500-7 7.500M11 1l7 7.500-7 7.500" /></svg>
        </div>
        <div className="flex h-[56px] items-center pb-px pl-[18px] text-[#b8b8b8]">
          <Folder w={30} h={24} className="mb-[3px]" />
          <Trash w={25} h={33} className="mb-[3px] ml-[22px] text-[#484848]" />
          <svg width="36" height="36" viewBox="0 0 36 36" fill="none" stroke="currentColor" strokeWidth="2.200" className="ml-[21px]">
            <path d="M0 5h20M7 5V1h7v4M3 6v15q0 2 2 2h4M7 9v9M11 9v4M15 8v2M9 15h26M18 14v-3h8v3M12 16v17q0 2 2 2h15q2 0 2-2V16M17 19v12M21.500 19v12M26 19v12" />
          </svg>
          <Sep className="ml-[15px] h-[40px] w-[3px] bg-[#2e2e2e]" />
          <div className="ml-[12px] flex h-[46px] w-[48px] items-center justify-center rounded-[4px] border-2 border-[#2e2e2e] bg-[#161616]">
            <svg width="34" height="30" viewBox="0 0 34 30" fill="none" stroke="#3b87dc" strokeWidth="3"><circle cx="18" cy="9" r="7.500" /><path d="M23 14l10 10" strokeWidth="3.500" /><path d="M1.500 30v-6M6 30v-8M10.500 30V20M15 30V17M19.500 30V13" strokeWidth="2.600" /></svg>
          </div>
          <div className="ml-[7px] flex h-[43px] w-[184px] items-center justify-center rounded-[4px] border-2 border-[#2e2e2e] bg-[#161616] text-[24px] font-semibold text-[#3b87dc]">匹配响度设置</div>
        </div>
        <div className="mt-[6px] mr-[8px] ml-[12px] flex h-[733px] shrink-0 flex-col">
          <div className="mb-[4px] grid h-[33px] shrink-0 grid-cols-[51px_313px_83px_122px_40px] items-center pb-[3px] pl-[10px]">
            <span>名称</span>
            <svg width="18" height="17" viewBox="0 0 18 17" fill="none" stroke="#a2a2a2" strokeWidth="4"><path d="M9 17V3M1.500 9.500L9 2.500l7.500 7" /></svg>
            <span>状态</span>
            <span>舞台</span>
            <span className="tracking-[-1.3px]">ITU</span>
          </div>
          <div className="flex h-[280px] shrink-0 flex-col rounded-t-[4px] border-2 border-[#2c2c2c] bg-[#1e1e1e]">
            <div className="grid h-[37px] grid-cols-[42px_525px_46px] items-center border-b-2 border-[#292929] pb-px pl-[12px] text-[#3f8fe6]">
              <WaveGlyph w={29} h={23} className="text-[#b4b4b4]" />
              <span className="tracking-[-0.72px]">01 出镜部分 ... 已提取 .wav *</span>
              <span className="tracking-[-1px]">-27</span>
            </div>
            <div className="mt-auto h-[20px] w-[123px] rounded-full bg-[#323232]" />
          </div>
          <div className="flex h-[21px] shrink-0 items-center bg-[#303030]">
            <Grip cols={12} rows={3} className="ml-[285px] text-[#7c7c7c]" />
            <Ic w={12} h={8} className="ml-[241px] text-[#6c6c6c]"><path d="M0 0h12L6 8z" /></Ic>
          </div>
          <div className="h-[395px] shrink-0 border-2 border-t-0 border-[#2c2c2c] pl-[10px]">
            <div className="mt-[31px] h-[312px] w-[541px] border-2 border-[#2c2c2c] pl-[16px]">
              <div className="mt-[-22px] ml-[-4px] flex h-[44px] w-[506px] items-center justify-between bg-[#232323] pr-[3px] pl-[9px]">
                <span>匹配到 :</span>
                <div className="flex h-[43px] w-[404px] items-center justify-between rounded-[5px] border-[3px] border-[#2f71bd] bg-[#222] pr-[10px] pb-px pl-[10px] tracking-[-1.250px] text-[#c4c4c4]">
                  ITU-R BS.1770-3 响度
                  <svg width="16" height="11" viewBox="0 0 16 11" fill="none" stroke="#c0c0c0" strokeWidth="3"><path d="M1.500 1.500L8 8.500l6.500-7" /></svg>
                </div>
              </div>
              <div className="mt-[6px] ml-[-6px]">
                <Param label="目标响度 :" value="-15" unit="LUFS" cols="grid-cols-[222px_1fr]" h="h-[44px]" />
                <Param label="容差 :" value="2" unit="LU" cols="grid-cols-[222px_1fr]" h="h-[44px]" />
                <Param label="最高实际峰值电平 :" value="-2" unit="dBTP" cols="grid-cols-[222px_1fr]" h="h-[45px]" />
              </div>
              <div className="mt-[5px] flex h-[46px] items-center text-[#454545]">
                <svg width="24" height="25" viewBox="0 0 24 25"><rect width="24" height="25" rx="3" fill="#4a4a4a" /><path d="M5 12l5 6 9-12" fill="none" stroke="#1e1e1e" strokeWidth="3.200" /></svg>
                <span className="ml-[8px]">使用实际峰值限制</span>
              </div>
              <div className="mt-[-4px] ml-[-6px]">
                <Param label="预测时间 :" value="12" unit="ms" cols="grid-cols-[157px_1fr]" h="h-[45px]" />
                <Param label="释放时间 :" value="200" unit="ms" cols="grid-cols-[157px_1fr]" h="h-[43px]" />
              </div>
            </div>
          </div>
        </div>
        <div className="mt-[9px] flex h-[46px] shrink-0 items-center pl-[11px]">
          <div className="h-[30px] w-[29px] rounded-[2px] border-[3px] border-[#8e8e8e]" />
          <span className="ml-[6px] w-[54px]">导出</span>
          <div className="ml-[7px] flex h-[43px] w-[162px] items-center justify-center rounded-full bg-[#272727] tracking-[-0.5px] text-[#474747]">导出设置 ...</div>
          <div className="ml-[118px] flex h-[43px] w-[120px] items-center justify-center rounded-full bg-[#272727] text-[#474747]">撤消</div>
          <div className="ml-[6px] flex h-[45px] w-[123px] items-center justify-center rounded-full border-[3px] border-[#8e8e8e] text-[#a4a4a4]">运行</div>
        </div>
      </div>
      <div className="h-full w-[6px] bg-[#0b0b0b]" />
    </div>
  );
}

/* ---------- watermark ---------- */
function Watermark() {
  return (
    <>
      <svg width="208" height="92" viewBox="0 0 208 92" className="absolute top-[137px] left-[2115px]" fill="#fff" fillOpacity="0.640">
        {[0, 104].map((o) => (
          <g key={o} transform={`translate(${o} 0)`}>
            <path fillRule="evenodd" d="M0 2L15 0l6 54q17-1 28 6 12 7 7 17-9 15-45 12zM23 67l3 15q12-4 17-10-4-4-20-5z" />
            <path d="M54 30l6-1 2 13-6 1zM63 28l6-1 1 14-6 1z" />
            <path d="M53 47l10-1 9 38-10 2z" />
            <path d="M70 9l9-2 9 77-9 2z" />
            <path d="M86 29l6-1 1 13-6 1zM95 27l6-1v13l-5 1z" />
            <path d="M91 45l11-1-1 40-9 1z" />
          </g>
        ))}
      </svg>
      <div className="absolute top-[141px] left-[2344px] flex h-[87px] w-[165px] items-center justify-center rounded-[8px] bg-white/60 pb-[8px] pl-[4px] text-[68px] leading-[70px] font-bold text-[#1c1c1c]">
        <span className="scale-y-[1.1] tracking-[4px]">课堂</span>
      </div>
      <div className="absolute top-[240px] left-[2277px] text-[40px] leading-[56px] tracking-[-0.3px] whitespace-nowrap text-white/70">@向天歌的课</div>
    </>
  );
}

export default function App() {
  return (
    <div className="relative flex h-[1600px] w-[2560px] flex-col overflow-hidden bg-black pt-[80px] font-['Noto_Sans_CJK_SC',sans-serif] leading-none">
      <TitleBar />
      <MenuBar />
      <Toolbar />
      <div className="flex h-[1128px] shrink-0 bg-[#181818] pt-[6px]">
        <div className="mr-[5px] ml-[1px] flex w-[428px] shrink-0 flex-col">
          <FilesPanel />
          <div className="mt-[46px] h-[608px] border-2 border-[#3a6ea8] bg-[#232323]" />
          <div className="mt-[5px] flex-1 bg-[#232323]" />
        </div>
        <EditorPanel />
        <EssentialSound />
        <Metadata />
      </div>
      <div className="flex h-[141px] shrink-0 bg-[#181818] pt-[5px]">
        <Levels />
        <SelectionView />
      </div>
      <StatusBar />
      <TaskBar />

      <LoudnessPanel />
      <div className="absolute top-[1003px] left-[29px] h-[377px] w-[542px] border-[3px] border-[#ff3434]" />
      <svg width="36" height="60" viewBox="0 0 36 60" className="absolute top-[1174px] left-[387px]"><path d="M2 2v44l9-8 10 20 9-4-9-19 13-1z" fill="#fff" stroke="#111" strokeWidth="2" /></svg>

      <div className="absolute top-[1293px] left-[760px] w-[300px] text-right text-[36.200px] leading-[36px] text-[#474747]">
        <div>18685911071</div>
        <div>1351093761</div>
      </div>
      <div className="absolute top-[1357px] left-[873px] text-[84.400px] leading-[90px] whitespace-nowrap text-[#e8e8e8] [text-shadow:2px_3px_3px_#000,0_0_4px_#111]">大家都按照我这个参数</div>
      <Watermark />
      <svg width="73" height="70" viewBox="0 0 73 70" className="absolute top-[1378px] left-[2435px]" fill="#fff" fillOpacity="0.820">
        <path fillRule="evenodd" d="M18 4q4-6 8-1l7 8h7l7-8q5-4 8 1 0 2-4 7h7q15 1 15 16v25q0 17-15 18H15Q0 69 0 52V27Q0 12 15 11h7q-4-5-4-7zM25 30v22q1 4 5 2l19-11q3-3 0-5L30 27q-5-1-5 3z" />
      </svg>
    </div>
  );
}
